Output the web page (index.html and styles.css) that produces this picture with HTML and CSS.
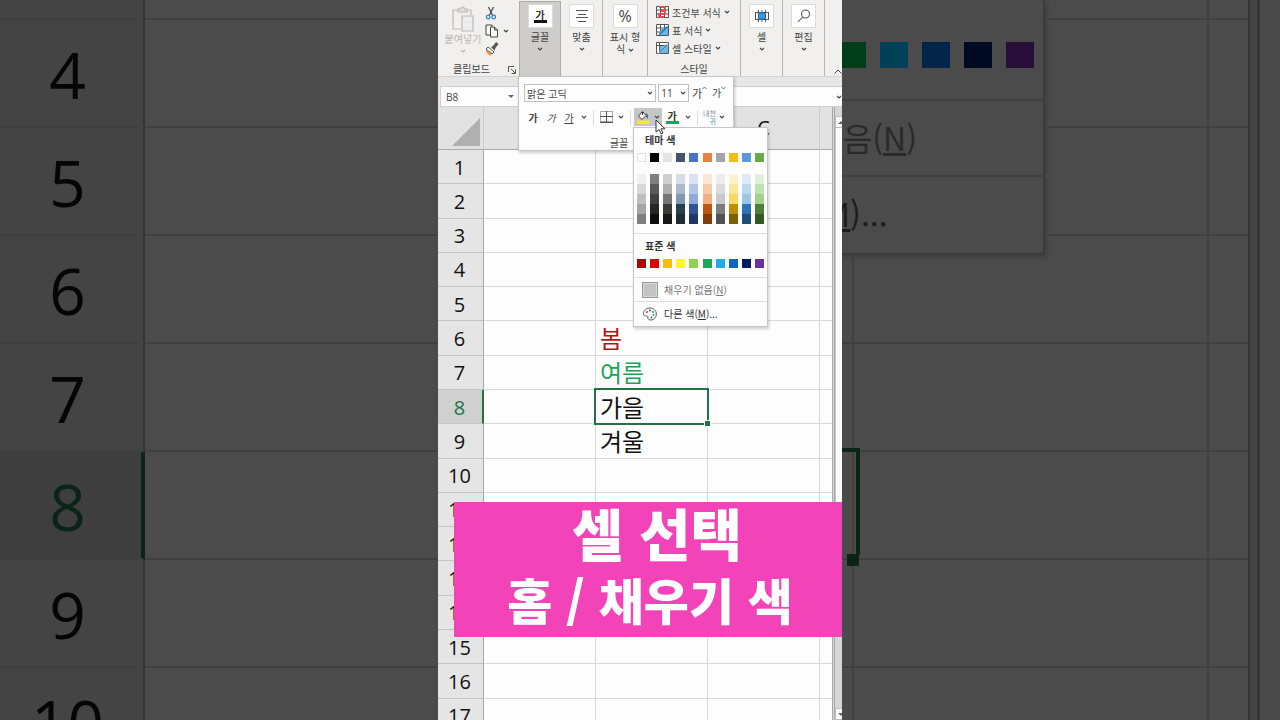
FILE: index.html
```html
<!DOCTYPE html>
<html lang="ko">
<head>
<meta charset="utf-8">
<title>셀 선택 - 홈 / 채우기 색</title>
<link rel="stylesheet" href="styles.css">
</head>
<body>
<svg class="defs" aria-hidden="true">
  <symbol id="chev" viewBox="0 0 6 4"><path d="M1 1l2 2 2-2" fill="none" stroke="currentColor" stroke-width="1.1"/></symbol>
</svg>
<div class="stage">
  <aside class="backdrop">
    <table class="zoomed">
      <tbody>
        <tr class="partial"><th></th><td></td></tr>
        <tr><th>4</th><td></td></tr>
        <tr><th>5</th><td></td></tr>
        <tr><th>6</th><td></td></tr>
        <tr><th>7</th><td></td></tr>
        <tr class="current"><th>8</th><td></td></tr>
        <tr><th>9</th><td></td></tr>
        <tr><th>10</th><td></td></tr>
      </tbody>
    </table>
  </aside>

  <main class="app">
    <header class="ribbon">
      <section class="group clipboard">
        <div class="clip-tools">
          <button class="paste" disabled>
            <svg width="24" height="27" viewBox="0 0 24 27" fill="none" stroke="#b9b9b9" stroke-width="1.2"><path d="M7 4H2v19h8M16 4h4v5"/><path d="M7 6V3h2.500a2 2 0 0 1 4 0H16v3z" fill="#dedede"/><path d="M11 10h11v15H11z" fill="#ededed"/></svg>
            <span>붙여넣기</span>
            <svg class="chev"><use href="#chev"/></svg>
          </button>
          <div class="clip-side">
            <button aria-label="잘라내기"><svg width="12" height="14" viewBox="0 0 12 14" fill="none"><path d="M3.500 1l4.200 8.500M8.500 1L4.300 9.500" stroke="#444" stroke-width="1.200"/><circle cx="3.200" cy="11" r="1.800" stroke="#2b88c8" stroke-width="1.300"/><circle cx="8.800" cy="11" r="1.800" stroke="#2b88c8" stroke-width="1.300"/></svg></button>
            <button aria-label="복사"><svg width="14" height="14" viewBox="0 0 14 14" fill="#fafafa" stroke="#444"><path d="M1 1h6v10H1z"/><path d="M5.500 3h4l3 3v7h-7zM9.500 3v3h3"/></svg><svg class="chev"><use href="#chev"/></svg></button>
            <button aria-label="서식 복사"><svg width="14" height="14" viewBox="0 0 14 14"><path d="M1 6l7 4-3 4-4-4z" fill="#ed9b3b"/><path d="M3 5l6 5-2 2-6-5z" fill="#fff" stroke="#555"/><path d="M6 5l2-1 3-4 2.500 2-3 4-1 2.500z" fill="#555"/></svg></button>
          </div>
        </div>
        <div class="caption">클립보드<svg class="launcher" width="8" height="8" viewBox="0 0 8 8" fill="none" stroke="#555"><path d="M.5 6V.5H6M3 3l4 4M7.500 3.500v4h-4"/></svg></div>
      </section>
      <button class="big open"><span class="tile"><span class="ga">가</span><span class="bar"></span></span>글꼴<svg class="chev"><use href="#chev"/></svg></button>
      <button class="big align"><span class="tile"><svg width="14" height="14" viewBox="0 0 14 14" stroke="#555"><path d="M1 1.500h12M3 5.500h8M1 8.500h12M3 12.500h8"/></svg></span>맞춤<svg class="chev"><use href="#chev"/></svg></button>
      <button class="big number"><span class="tile percent">%</span><span>표시 형<br>식 <svg class="chev"><use href="#chev"/></svg></span></button>
      <section class="group styles">
        <div class="style-list">
          <button><svg width="13" height="12" viewBox="0 0 13 12"><path d="M.5.5h12v11H.5zM.5 4h12M.5 8h12M4.500.5v11M8.500.5v11" fill="#fff" stroke="#555"/><path d="M3 1h6v3H6v1h3v3H3v3h5" fill="none" stroke="#dd5053" stroke-width="1.800"/></svg>조건부 서식<svg class="chev"><use href="#chev"/></svg></button>
          <button><svg width="13" height="12" viewBox="0 0 13 12"><path d="M.5.5h12v11H.5zM.5 4h12M.5 8h12M4.500.5v11M8.500.5v11" fill="#fff" stroke="#555"/><path d="M5 5h7v6H3z" fill="#6cb5e6"/><path d="M12.500 3L5 10l-3 1.500L3.500 9 11 2z" fill="#2b7dbd"/></svg>표 서식<svg class="chev"><use href="#chev"/></svg></button>
          <button><svg width="13" height="12" viewBox="0 0 13 12"><path d="M.5.5h12v11H.5zM.5 3.500h12M3.500.5v11" fill="#fff" stroke="#555"/><path d="M4 4h8v7H4z" fill="#6cb5e6"/><path d="M12.500 3L5 10l-3 1.500L3.500 9 11 2z" fill="#2b7dbd" stroke="#eee" stroke-width=".5"/></svg>셀 스타일<svg class="chev"><use href="#chev"/></svg></button>
        </div>
        <div class="caption">스타일</div>
      </section>
      <button class="big cells"><span class="tile"><svg width="14" height="14" viewBox="0 0 14 14" fill="none" stroke="#555"><path d="M3.500 1v12M10.500 1v12M.5 3.500h13M.5 10.500h13M.5 3v8M13.500 3v8M7 1v12"/><path d="M3.500 4h7v6h-7z" fill="#3c9be0" stroke="#1e6fb0"/></svg></span>셀<svg class="chev"><use href="#chev"/></svg></button>
      <button class="big edit"><span class="tile"><svg width="14" height="14" viewBox="0 0 14 14" fill="none" stroke="#555" stroke-width="1.100"><circle cx="8.500" cy="5" r="4"/><path d="M5.600 8L1 13"/></svg></span>편집<svg class="chev"><use href="#chev"/></svg></button>
      <button class="collapse" aria-label="리본 축소"><svg width="8" height="5" viewBox="0 0 8 5"><path d="M.5 4.500L4 1l3.500 3.500" fill="none" stroke="#444"/></svg></button>
    </header>

    <div class="formula">
      <div class="namebox"><input aria-label="이름 상자" value="B8"><i class="tri-down"></i></div>
      <input class="fx" aria-label="수식 입력줄">
      <button class="expand" aria-label="수식 입력줄 확장"><svg class="chev"><use href="#chev"/></svg></button>
    </div>

    <div class="sheet">
      <table class="cells-table">
        <colgroup><col class="c-row"><col class="c"><col class="c"><col class="c"><col></colgroup>
        <thead><tr><th><i class="corner"></i></th><th>A</th><th>B</th><th>C</th><th></th></tr></thead>
        <tbody>
          <tr><th>1</th><td></td><td></td><td></td><td></td></tr>
          <tr><th>2</th><td></td><td></td><td></td><td></td></tr>
          <tr><th>3</th><td></td><td></td><td></td><td></td></tr>
          <tr><th>4</th><td></td><td></td><td></td><td></td></tr>
          <tr><th>5</th><td></td><td></td><td></td><td></td></tr>
          <tr><th>6</th><td></td><td class="red">봄</td><td></td><td></td></tr>
          <tr><th>7</th><td></td><td class="green">여름</td><td></td><td></td></tr>
          <tr class="current"><th>8</th><td></td><td class="selected">가을</td><td></td><td></td></tr>
          <tr><th>9</th><td></td><td>겨울</td><td></td><td></td></tr>
          <tr><th>10</th><td></td><td></td><td></td><td></td></tr>
          <tr><th>11</th><td></td><td></td><td></td><td></td></tr>
          <tr><th>12</th><td></td><td></td><td></td><td></td></tr>
          <tr><th>13</th><td></td><td></td><td></td><td></td></tr>
          <tr><th>14</th><td></td><td></td><td></td><td></td></tr>
          <tr><th>15</th><td></td><td></td><td></td><td></td></tr>
          <tr><th>16</th><td></td><td></td><td></td><td></td></tr>
          <tr><th>17</th><td></td><td></td><td></td><td></td></tr>
        </tbody>
      </table>
      <div class="scroll"><i class="arrow up"></i><i class="thumb"></i><i class="arrow down"></i></div>
    </div>

    <div class="mini">
      <div class="mini-row">
        <div class="combo font"><input aria-label="글꼴 이름" value="맑은 고딕"><svg class="chev"><use href="#chev"/></svg></div>
        <div class="combo size"><input aria-label="글꼴 크기" value="11"><svg class="chev"><use href="#chev"/></svg></div>
        <button class="grow">가<svg width="5" height="4" viewBox="0 0 5 4"><path d="M.5 3l2-2 2 2" fill="none" stroke="#2f7fb0"/></svg></button>
        <button class="shrink">가<svg width="5" height="4" viewBox="0 0 5 4"><path d="M.5 1l2 2 2-2" fill="none" stroke="#2f7fb0"/></svg></button>
      </div>
      <div class="mini-row tools">
        <button class="w18"><b>가</b></button>
        <button class="w18"><em>가</em></button>
        <button class="w18"><u>가</u></button>
        <button class="drop" aria-label="밑줄 옵션"><svg class="chev"><use href="#chev"/></svg></button>
        <i class="vsep"></i>
        <button class="w18" aria-label="테두리"><svg width="13" height="12" viewBox="0 0 13 12" fill="none" stroke="#555"><path d="M.5.5h12v10H.5z" stroke-dasharray="1 1"/><path d="M6.500 0v11M0 5.500h13M0 11.500h13"/></svg></button>
        <button class="drop" aria-label="테두리 옵션"><svg class="chev"><use href="#chev"/></svg></button>
        <i class="vsep"></i>
        <button class="fill" aria-label="채우기 색"><svg width="13" height="14" viewBox="0 0 13 14"><path d="M5 2L1.500 6 5 9.500 9 5.500 5.500 1.500V5" fill="#fff" stroke="#333"/><path d="M9 3c2 1 2.500 3 2 6-1-1-2-2-2-4z" fill="#2b6f9e"/><path d="M0 10.500h12.500v3.500H0z" fill="#f4ee28"/></svg><svg class="chev"><use href="#chev"/></svg></button>
        <button class="color"><b>가</b><span></span></button>
        <button class="drop" aria-label="글꼴 색 옵션"><svg class="chev"><use href="#chev"/></svg></button>
        <i class="vsep"></i>
        <button class="ruby"><span>내천</span><span class="teal">귀</span></button>
        <button class="drop" aria-label="윗주 옵션"><svg class="chev"><use href="#chev"/></svg></button>
      </div>
      <div class="mini-caption">글꼴</div>
    </div>

    <div class="palette">
      <h2>테마 색</h2>
      <div class="swatches" id="theme"></div>
      <div class="swatches shades" id="shades"></div>
      <hr>
      <h2>표준 색</h2>
      <div class="swatches standard" id="standard"></div>
      <hr>
      <button class="item muted"><i class="nofill"></i><span>채우기 없음(<u>N</u>)</span></button>
      <hr>
      <button class="item"><svg width="16" height="14" viewBox="0 0 16 14"><path d="M8 1C4 1 1.500 3.500 1.500 6.500S4 9 5 9s1 1 .8 2 1 2 3 2c3 0 5.500-2.500 5.500-6S11.500 1 8 1z" fill="#fff" stroke="#555"/><circle cx="5" cy="5" r="1" fill="#d33"/><circle cx="8" cy="3.500" r="1" fill="#555"/><circle cx="11" cy="5" r="1" fill="#2b88c8"/><circle cx="11.500" cy="8" r="1" fill="#3a9d50"/><circle cx="9.500" cy="10.500" r="1" fill="#555"/></svg><span>다른 색(<u>M</u>)...</span></button>
    </div>

    <svg class="cursor" width="11" height="16" viewBox="0 0 11 16"><path d="M1 1v12l3-2.500 2 4.500 2-1-2-4.200h4z" fill="#fff" stroke="#333"/></svg>

    <div class="banner"><p>셀 선택</p><p class="second">홈 / 채우기 색</p></div>
  </main>

  <aside class="backdrop right">
    <table class="zoomed">
      <tbody>
        <tr class="partial"><td class="b"></td><td class="c"></td><td></td></tr>
        <tr><td class="b"></td><td class="c"></td><td></td></tr>
        <tr><td class="b"></td><td class="c"></td><td></td></tr>
        <tr><td class="b"></td><td class="c"></td><td></td></tr>
        <tr><td class="b"></td><td class="c"></td><td></td></tr>
        <tr><td class="b picked"></td><td class="c"></td><td></td></tr>
        <tr><td class="b"></td><td class="c"></td><td></td></tr>
        <tr><td class="b"></td><td class="c"></td><td></td></tr>
      </tbody>
    </table>
    <div class="zoomed-scroll"></div>
    <div class="zoomed-menu">
      <div class="zoomed-swatches"><i class="g"></i><i class="s"></i><i class="bl"></i><i class="n"></i><i class="p"></i></div>
      <div class="zoomed-item dim">채우기 없음(<u>N</u>)</div>
      <div class="zoomed-item">다른 색(<u>M</u>)...</div>
    </div>
  </aside>
</div>
<script src="palette.js"></script>
</body>
</html>
```
FILE: styles.css
```css
* { box-sizing: border-box; }
body { margin: 0; background: #4b4b4b; font-family: "Noto Sans CJK KR", sans-serif; font-size: 10px; color: #444; }
button, input { font: inherit; color: inherit; border: 0; padding: 0; margin: 0; background: none; min-width: 0; }
input { outline: 0; }
table { border-collapse: separate; border-spacing: 0; table-layout: fixed; }
th, td { padding: 0; font-weight: 400; }
.defs { position: absolute; width: 0; height: 0; }
.chev { width: 6px; height: 4px; flex: none; }
.stage { display: grid; grid-template-columns: 1fr 404px 1fr; height: 100vh; overflow: hidden; }

/* enlarged, darkened sheet on both sides */
.backdrop { position: relative; overflow: hidden; background: #4b4b4b; color: #050505; }
.zoomed { width: 100%; }
.zoomed tr { height: 108px; }
.zoomed .partial { height: 20px; }
.zoomed th, .zoomed td { border-bottom: 2px solid #404040; }
.zoomed th { width: 145px; padding: 4px 8px 0 0; background: #444; border-right: 2px solid #333; font-family: "Open Sans", sans-serif; font-size: 64px; line-height: 80px; }
.zoomed .current th { background: #3e3e3e; color: #0c2418; border-right: 4px solid #0c2418; padding-right: 6px; }
.right { display: flex; }
.right .zoomed { flex: 1; }
.zoomed .b { width: 12px; border-right: 2px solid #404040; }
.zoomed .c { width: 355px; border-right: 2px solid #404040; }
.zoomed .picked { position: relative; }
.picked::before { content: ""; position: absolute; left: 0; top: -4px; width: 14px; height: 103px; border: solid #0c2418; border-width: 4px 4px 0 0; }
.picked::after { content: ""; position: absolute; left: 5px; bottom: -8px; width: 12px; height: 12px; background: #0c2418; }
.zoomed-scroll { width: 32px; background: linear-gradient(90deg, #353535 2px, #454545 2px 9px, #383838 9px 12px, #4a4a4a 12px); }
.zoomed-menu { position: absolute; left: -224px; top: 0; width: 427px; background: #4b4b4b; border: solid #3c3c3c; border-width: 0 2px 2px 0; box-shadow: 2px 3px 4px #404040; }
.zoomed-swatches { display: flex; justify-content: flex-end; gap: 14px; height: 101px; padding: 42px 9px 31px 0; border-bottom: 2px solid #404040; }
.zoomed-swatches i { width: 28px; }
.g { background: #003d19; } .s { background: #00415a; } .bl { background: #002548; } .n { background: #000a20; } .p { background: #260e38; }
.zoomed-item { height: 76px; padding-left: 98px; font-size: 32px; line-height: 72px; font-weight: 400; color: #1c1c1c; white-space: nowrap; }
.zoomed-item.dim { color: #2a2a2a; border-bottom: 2px solid #404040; }

.app { position: relative; overflow: hidden; display: flex; flex-direction: column; background: #fdfdfd; }

.ribbon { display: flex; height: 77px; background: #f1f0ee; border-bottom: 1px solid #d2d2d2; }
.group { display: flex; flex-direction: column; justify-content: space-between; border-right: 1px solid #b5b5b5; }
.caption { position: relative; height: 14px; line-height: 14px; text-align: center; }
.clipboard { width: 81px; border-right: 0; }
.clipboard .caption { padding-right: 14px; }
.launcher { position: absolute; right: 3px; top: 4px; }
.clip-tools { display: flex; padding: 6px 0 0 5px; }
.paste { display: flex; flex-direction: column; align-items: center; width: 40px; color: #b5b5b5; line-height: 12px; white-space: nowrap; }
.paste .chev { margin-top: 4px; }
.clip-side { display: flex; flex-direction: column; gap: 4px; padding-left: 2px; }
.clip-side button { display: flex; align-items: center; gap: 4px; height: 14px; }
.big { display: flex; flex-direction: column; align-items: center; width: 42px; padding-top: 4px; line-height: 12px; border-right: 1px solid #b5b5b5; }
.big .tile { display: flex; flex-direction: column; align-items: center; justify-content: center; width: 25px; height: 24px; margin-bottom: 3px; background: #fff; border: 1px solid #dcdcdc; flex: none; }
.big > .chev { margin-top: 4px; }
.big span .chev { vertical-align: middle; }
.open { background: #cfcdcb; border: 1px solid #aaa; border-bottom: 0; margin-top: 1px; padding-top: 2px; }
.ga { font-weight: 700; color: #333; line-height: 11px; }
.bar { width: 13px; height: 3px; background: #111; }
.percent { font-family: "Open Sans", sans-serif; font-size: 16px; }
.number { width: 45px; }
.styles { width: 93px; }
.style-list { display: flex; flex-direction: column; padding: 3px 0 0 8px; }
.style-list button { display: flex; align-items: center; gap: 3px; height: 18px; white-space: nowrap; }
.collapse { flex: 1; display: flex; align-items: flex-end; justify-content: flex-end; padding-bottom: 2px; }

.formula { display: flex; height: 30px; padding: 9px 0 0 2px; background: #e6e6e6; }
.formula > * { height: 21px; background: #fdfdfd; border: solid #cfcfcf; border-width: 1px 0; }
.namebox { display: flex; align-items: center; width: 79px; padding: 0 4px 0 5px; border-width: 1px; font-family: "Open Sans", sans-serif; }
.namebox input { flex: 1; width: 0; }
.tri-down { border: 3px solid transparent; border-top-color: #666; border-bottom: 0; }
.fx { flex: 1; }
.expand { width: 8px; display: flex; align-items: center; justify-content: flex-end; }

.sheet { display: flex; flex: 1; min-height: 0; }
.cells-table { flex: 1; width: 0; height: 626px; font-size: 24px; color: #111; }
.c-row { width: 46px; } .cells-table col.c { width: 112px; }
.cells-table th { font-family: "Open Sans", sans-serif; font-size: 20px; line-height: 24px; background: #e5e5e5; border-right: 1px solid #a5a5a5; border-bottom: 1px solid #c4c4c4; }
.cells-table tbody tr { height: 34px; }
.cells-table tbody th { padding: 2px 2px 0 0; line-height: 22px; }
.cells-table thead th { height: 43px; background: #e2e2e2; border-right-color: #cacaca; border-bottom-color: #aaa; }
.cells-table td { padding-left: 4px; line-height: 24px; background: #fdfdfd; border-right: 1px solid #d8d8d8; border-bottom: 1px solid #d8d8d8; }
.cells-table th:last-child, .cells-table td:last-child { border-right: 0; }
.corner { display: block; width: 28px; height: 28px; margin: 8px 0 0 14px; background: #b0b0b0; clip-path: polygon(100% 0, 100% 100%, 0 100%); }
.cells-table .current th { background: #d0d0d0; color: #217346; border-right: 2px solid #217346; padding-right: 1px; }
.red { color: #b01515; } .green { color: #18a555; }
.cells-table .red { color: #b01515; }
.cells-table .selected { position: relative; }
.selected::before { content: ""; position: absolute; inset: -2px; border: 2px solid #217346; }
.selected::after { content: ""; position: absolute; right: -3px; bottom: -3px; width: 5px; height: 5px; background: #217346; outline: 1px solid #fdfdfd; }
.scroll { display: flex; flex-direction: column; width: 10px; padding-top: 9px; background: #d6d6d6; border-left: 3px double #aaa; }
.thumb { flex: 1; margin-bottom: 73px; background: #fdfdfd; border-left: 1px solid #c8c8c8; }
.arrow { height: 12px; background: #fdfdfd; border: 1px solid #bbb; border-right: 0; }
.arrow::after { content: ""; display: block; margin: 4px 0 0 2px; border: 3px solid transparent; }
.up::after { border-bottom-color: #666; border-top: 0; }
.down::after { border-top-color: #666; border-bottom: 0; }

.mini { position: absolute; left: 80px; top: 76px; width: 216px; height: 75px; padding: 7px 5px 0; background: #fdfdfd; border: 1px solid #c6c6c6; box-shadow: 1px 2px 3px #0003; }
.mini-row { display: flex; align-items: center; gap: 2px; height: 18px; }
.combo { display: flex; align-items: center; height: 18px; padding: 0 2px; border: 1px solid #c0c0c0; }
.combo input { flex: 1; width: 0; }
.combo.font { width: 135px; } .combo.size { width: 31px; font-family: "Open Sans", sans-serif; }
.grow, .shrink { display: flex; align-items: flex-start; justify-content: center; width: 18px; line-height: 14px; }
.grow { font-size: 11px; }
.tools { gap: 0; margin-top: 6px; height: 18px; }
.tools button { display: flex; align-items: center; justify-content: center; height: 18px; }
.tools .w18 { width: 18px; } .tools .drop { width: 12px; }
.vsep { width: 1px; height: 15px; margin: 0 3px; background: #ddd; }
.tools .fill { gap: 4px; width: 28px; background: #c6c6c6; }
.tools .color { flex-direction: column; width: 20px; line-height: 11px; color: #333; }
.color span { width: 13px; height: 3px; background: #18a555; }
.tools .ruby { flex-direction: column; align-items: flex-end; width: 15px; font-size: 7px; line-height: 8px; color: #888; white-space: nowrap; }
.teal { color: #3598a8; }
.mini-caption { padding: 10px 14px 0 0; line-height: 14px; text-align: center; }

.palette { position: absolute; left: 195px; top: 127px; width: 135px; padding-bottom: 1px; background: #fdfdfd; border: 1px solid #c6c6c6; box-shadow: 1px 2px 3px #0003; color: #333; }
.palette h2 { margin: 0; padding-left: 11px; font-size: 10px; line-height: 23px; height: 25px; font-weight: 700; }
.swatches { display: grid; grid-template-columns: repeat(10, 9px); justify-content: space-between; padding: 0 3px; }
.swatches button { height: 9px; }
.shades { margin: 12px 0 9px; }
.shades button { height: 10px; }
.standard { margin-bottom: 9px; }
.swatches .outlined { border: 1px solid #e2e2e2; }
.palette hr { height: 1px; margin: 0; border: 0; background: #dedede; }
.item { display: flex; align-items: center; gap: 6px; width: 100%; height: 23px; padding-left: 8px; }
.item.muted { color: #777; }
.nofill { width: 16px; height: 16px; background: #c4c4c4; border: 1px solid #999; box-shadow: inset 0 0 0 1px #d8d8d8; }
.cursor { position: absolute; left: 217px; top: 119px; }

.banner { position: absolute; left: 16px; right: 0; top: 502px; height: 135px; background: #f244b8; color: #fff; font-weight: 900; text-align: center; }
.banner p { margin: 0; padding-left: 18px; font-size: 56px; line-height: 60px; }
.banner .second { padding-left: 4px; font-size: 49px; line-height: 74px; }
```
FILE: palette.js
```js
const theme = ['#ffffff', '#000000', '#e4e4e4', '#44546a', '#4472c4', '#e5823c', '#a5a5a5', '#f6bd0c', '#5b9bd5', '#6aa84a'];
const shades = [
  ['#f0f0f0', '#7f7f7f', '#cfcfcf', '#d6dce5', '#d9e2f3', '#fae5d6', '#ececec', '#fff2cc', '#deebf7', '#e0f0d9'],
  ['#d8d8d8', '#595959', '#aeaeae', '#adb9ca', '#b4c6e7', '#f6cbab', '#dbdbdb', '#fee599', '#bdd7ee', '#c0e2b0'],
  ['#bfbfbf', '#404040', '#767676', '#8497b0', '#8eaadb', '#f2b083', '#c9c9c9', '#fbd765', '#9dc6e6', '#a4d08b'],
  ['#a5a5a5', '#262626', '#3b3838', '#27404d', '#2f5496', '#bf560f', '#7b7b7b', '#bb9000', '#2e75b6', '#4c8034'],
  ['#7f7f7f', '#0d0d0d', '#171717', '#1d2c36', '#1f3864', '#833c0b', '#525252', '#7f6000', '#1f4e79', '#34581f']
];
const standard = ['#b50000', '#e60000', '#f6bd0c', '#ffff00', '#92d050', '#12ad55', '#1cace8', '#0e68c0', '#001c60', '#6c30a0'];

function fill(id, colors) {
  const box = document.getElementById(id);
  colors.forEach(color => {
    const button = document.createElement('button');
    button.setAttribute('aria-label', color);
    button.style.background = color;
    if (color === '#ffffff') button.className = 'outlined';
    box.append(button);
  });
}

fill('theme', theme);
fill('shades', shades.flat());
fill('standard', standard);
```
